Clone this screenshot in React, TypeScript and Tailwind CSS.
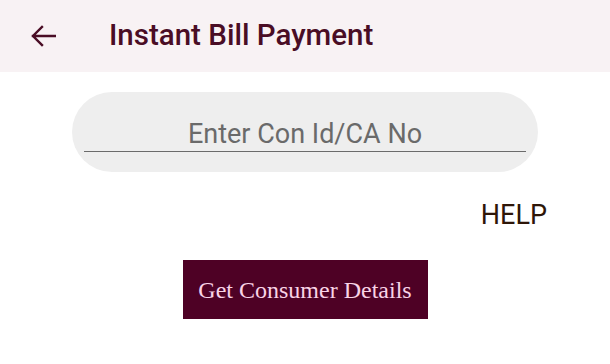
import { useState } from 'react'

export default function App() {
  const [conId, setConId] = useState('')

  return (
    <div className="w-[610px] h-[364px] bg-white overflow-hidden font-['Roboto',sans-serif]">
      {/* Toolbar */}
      <div className="h-[72px] bg-[#f8f2f4] flex items-center pl-[30px]">
        <svg width="26" height="22" viewBox="0 0 26 22" fill="none" className="shrink-0">
          <path d="M25 11H3M12 2L3 11L12 20" stroke="#4a0d25" strokeWidth="2.4" strokeLinecap="square" />
        </svg>
        <h1 className="ml-[53px] text-[29.5px] font-medium text-[#4a0d25] leading-none">Instant Bill Payment</h1>
      </div>

      {/* Consumer id input */}
      <div className="mt-[20px] mx-auto w-[466px] h-[80px] rounded-full bg-[#eeeeee] px-[12px] pt-[25px]">
        <input
          value={conId}
          onChange={(e) => setConId(e.target.value)}
          placeholder="Enter Con Id/CA No"
          className="w-full h-[35px] bg-transparent text-center text-[27px] leading-none text-[#444] placeholder:text-[#6a6a6a] border-b border-[#6b6b6b] outline-none"
        />
      </div>

      <div className="mt-[30px] flex justify-end pr-[63px]">
        <span className="text-[27px] leading-none text-[#2e1608]">HELP</span>
      </div>

      <div className="mt-[31px] flex justify-center">
        <button className="w-[245px] h-[59px] bg-[#4e0125] text-[#f9d3e6] text-[24px] font-['Liberation_Serif',serif]">
          Get Consumer Details
        </button>
      </div>
    </div>
  )
}
